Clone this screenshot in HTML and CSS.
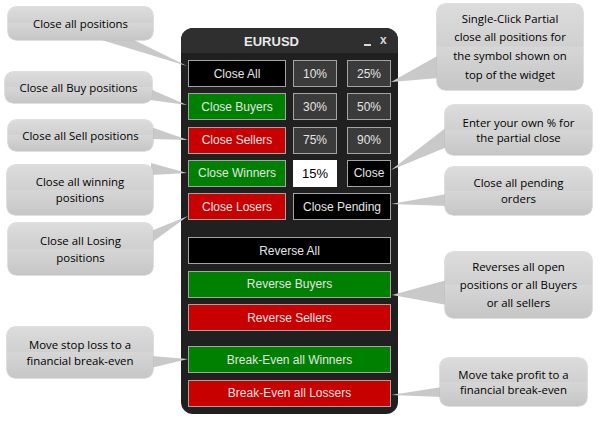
FILE: index.html
```html
<!DOCTYPE html>
<html>
<head>
<meta charset="utf-8">
<link rel="stylesheet" href="styles.css">
</head>
<body>
<div class="canvas">
  <div class="panel">
    <div class="titlebar">
      <span class="title">EURUSD</span>
      <span class="ctrls"><span class="min"></span><span class="x">x</span></span>
    </div>
    <div class="body">
      <div class="grid">
        <div class="btn black">Close All</div>
        <div class="btn gray">10%</div>
        <div class="btn gray c3">25%</div>
        <div class="btn green">Close Buyers</div>
        <div class="btn gray">30%</div>
        <div class="btn gray c3">50%</div>
        <div class="btn red">Close Sellers</div>
        <div class="btn gray">75%</div>
        <div class="btn gray c3">90%</div>
        <div class="btn green">Close Winners</div>
        <div class="btn input">15%</div>
        <div class="btn black c3">Close</div>
        <div class="btn red">Close Losers</div>
        <div class="btn black span2">Close Pending</div>
      </div>
      <div class="stack rev">
        <div class="btn black">Reverse All</div>
        <div class="btn green">Reverse Buyers</div>
        <div class="btn red">Reverse Sellers</div>
      </div>
      <div class="stack be">
        <div class="btn green">Break-Even all Winners</div>
        <div class="btn red">Break-Even all Lossers</div>
      </div>
    </div>
  </div>

  <svg class="tails" width="600" height="424" viewBox="0 0 600 424">
    <polygon points="95,38 130,38 187,66"/>
    <polygon points="150,89 150,100 187,105"/>
    <polygon points="151,127 151,139 188,140"/>
    <polygon points="151,163 151,175 187,173"/>
    <polygon points="151,231 151,243 188,216"/>
    <polygon points="151,356 151,368 188,359"/>
    <polygon points="439,55 439,78 391,82"/>
    <polygon points="447,127 447,147 391,170"/>
    <polygon points="447,194 447,206 391,204"/>
    <polygon points="447,280 447,305 392,295"/>
    <polygon points="442,387 442,397 391,395"/>
  </svg>

  <div class="callout k1">Close all positions</div>
  <div class="callout k2">Close all Buy positions</div>
  <div class="callout k3">Close all Sell positions</div>
  <div class="callout k4">Close all winning<br>positions</div>
  <div class="callout k5">Close all Losing<br>positions</div>
  <div class="callout k6">Move stop loss to a<br>financial break-even</div>
  <div class="callout k7">Single-Click Partial<br>close all positions for<br>the symbol shown on<br>top of the widget</div>
  <div class="callout k8">Enter your own % for<br>the partial close</div>
  <div class="callout k9">Close all pending<br>orders</div>
  <div class="callout k10">Reverses all open<br>positions or all Buyers<br>or all sellers</div>
  <div class="callout k11">Move take profit to a<br>financial break-even</div>
</div>
</body>
</html>
```

FILE: styles.css
```css
* { box-sizing: border-box; }
html, body { margin: 0; padding: 0; background: #fff; }
.canvas {
  position: relative;
  width: 600px;
  height: 424px;
  overflow: hidden;
  font-family: "Liberation Sans", Arial, sans-serif;
}

/* widget panel */
.panel {
  position: absolute;
  left: 181px;
  top: 28px;
  width: 217px;
  background: #202020;
  border-radius: 12px;
  overflow: hidden;
}
.titlebar {
  height: 25px;
  background: #2f2f2f;
  display: flex;
  align-items: center;
  color: #e8e8e8;
  font-weight: bold;
}
.title {
  flex: 1;
  text-align: center;
  font-size: 13px;
  padding-left: 2px;
  margin-top: 1px;
}
.ctrls {
  width: 38px;
  display: flex;
  align-items: center;
  gap: 9px;
  padding-left: 4px;
}
.min {
  width: 7px;
  height: 2px;
  background: #d8d8d8;
  margin-top: 8px;
}
.x {
  font-size: 12px;
  color: #d8d8d8;
  margin-top: -2px;
}
.body {
  padding: 7px 7px 7.5px 7px;
}
.grid {
  display: grid;
  grid-template-columns: 98px 44px 47px;
  grid-auto-rows: 27px;
  column-gap: 7px;
  row-gap: 6.25px;
}
.c3 { justify-self: end; width: 44px; }
.span2 { grid-column: span 2; }
.stack {
  display: flex;
  flex-direction: column;
  gap: 6.5px;
}
.stack .btn { height: 27px; }
.rev { margin-top: 17px; }
.be { margin-top: 15px; }

.btn {
  display: flex;
  align-items: center;
  justify-content: center;
  border: 1px solid #a4a4a4;
  color: #e4e4e4;
  font-size: 12px;
  white-space: nowrap;
}
.black { background: #000; }
.gray { background: #3b3b3b; }
.green { background: #008000; }
.red { background: #c80000; }
.input { background: #fff; color: #000; border-color: #fff; font-size: 13px; }

/* callout tails */
.tails {
  position: absolute;
  left: 0;
  top: 0;
  pointer-events: none;
}
.tails polygon { fill: #c9c9c9; }

/* callouts */
.callout {
  position: absolute;
  display: flex;
  align-items: center;
  justify-content: center;
  text-align: center;
  border-radius: 8px;
  background: linear-gradient(#dcdcdc, #d0d0d0 49%, #d6d6d6 50%, #c6c6c6);
  box-shadow: 0 0 0 0.5px #c0c0c0;
  color: #000;
  font-family: "Open Sans", "Liberation Sans", sans-serif;
  font-size: 11.4px;
  line-height: 16px;
}
.k1 { left: 8px; top: 7px; width: 145px; height: 33px; }
.k2 { left: 5px; top: 72px; width: 147px; height: 31px; }
.k3 { left: 8px; top: 120px; width: 145px; height: 31px; }
.k4 { left: 7px; top: 165px; width: 146px; height: 50px; }
.k5 { left: 8px; top: 223px; width: 145px; height: 52px; line-height: 17px; }
.k6 { left: 7px; top: 327px; width: 146px; height: 51px; }
.k7 { left: 437px; top: 4px; width: 146px; height: 86px; line-height: 18.7px; }
.k8 { left: 445px; top: 105px; width: 147px; height: 50px; line-height: 15px; }
.k9 { left: 445px; top: 167px; width: 147px; height: 48px; }
.k10 { left: 445px; top: 252px; width: 147px; height: 66px; line-height: 18px; }
.k11 { left: 440px; top: 358px; width: 147px; height: 48px; line-height: 15px; }
```
